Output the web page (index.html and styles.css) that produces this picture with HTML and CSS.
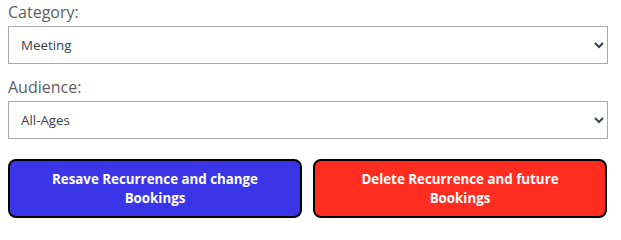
FILE: index.html
```html
<!DOCTYPE html>
<html lang="en">
<head>
<meta charset="utf-8">
<title>Recurrence</title>
<link rel="stylesheet" href="styles.css">
</head>
<body>
<form class="form">
  <div class="field">
    <label class="label" for="category">Category:</label>
    <select class="select" id="category">
      <option>Meeting</option>
    </select>
  </div>
  <div class="field">
    <label class="label" for="audience">Audience:</label>
    <select class="select" id="audience">
      <option>All-Ages</option>
    </select>
  </div>
  <div class="actions">
    <button type="button" class="btn btn-blue">Resave Recurrence and change Bookings</button>
    <button type="button" class="btn btn-red">Delete Recurrence and future Bookings</button>
  </div>
</form>
</body>
</html>
```

FILE: styles.css
```css
html, body {
  margin: 0;
  padding: 0;
  background: #ffffff;
}
body {
  font-family: "Open Sans", "Liberation Sans", sans-serif;
  padding: 0 8px;
}
.form {
  width: 600px;
  display: flex;
  flex-direction: column;
}
.field {
  display: flex;
  flex-direction: column;
  margin-bottom: 11px;
}
.label {
  font-size: 16px;
  line-height: 24px;
  color: #5e5e5e;
  margin-bottom: 2px;
}
.select {
  height: 38px;
  width: 600px;
  box-sizing: border-box;
  border: 1px solid #aaaaaa;
  border-radius: 0;
  background: #ffffff;
  font-family: "Open Sans", "Liberation Sans", sans-serif;
  font-size: 13.333px;
  color: #3a3f4a;
  padding: 0 8px;
  margin: 0;
}
.actions {
  display: flex;
  gap: 11px;
  margin-top: 9px;
}
.btn {
  width: 294px;
  height: 59px;
  box-sizing: border-box;
  border: 2px solid #000000;
  border-radius: 8px;
  padding: 0 40px;
  font-family: "Open Sans", "Liberation Sans", sans-serif;
  font-weight: 700;
  font-size: 13.333px;
  line-height: 19px;
  color: #ffffff;
  text-align: center;
  margin: 0;
}
.btn-blue {
  background: #3a36e8;
}
.btn-red {
  background: #ff2d20;
}
```
